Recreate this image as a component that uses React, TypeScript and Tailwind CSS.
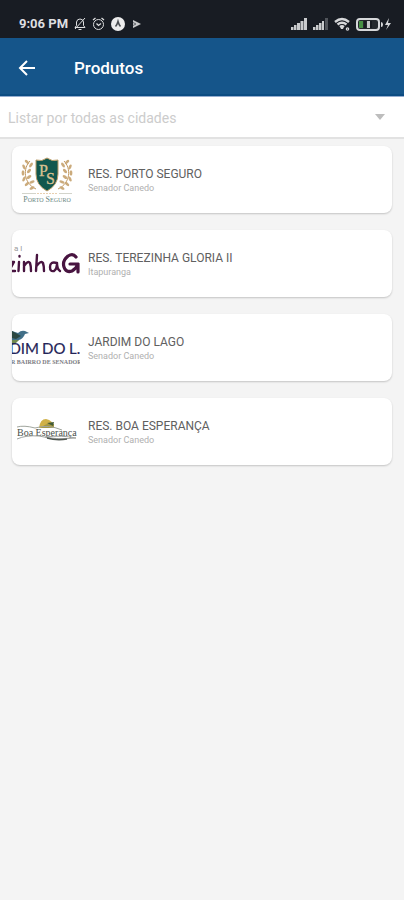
import React from "react";

function PortoSeguroLogo() {
  const leaves = [
    [13, 16, -50], [10, 21, -25], [9, 27, 0], [10, 33, 25], [13, 38, 50], [18, 42, 65],
    [17, 19, 35], [15, 25, 40], [15, 31, 55], [18, 36, 70],
  ];
  const branch = (
    <g>
      <path d="M18 15 C11 22 11 37 24 43" fill="none" stroke="#c39a63" strokeWidth="1" />
      {leaves.map(([x, y, r]) => (
        <ellipse key={`${x}-${y}`} cx={x + 2} cy={y} rx="1.400" ry="2.700" fill="#cbab7c" transform={`rotate(${r} ${x + 2} ${y})`} />
      ))}
    </g>
  );
  return (
    <svg viewBox="0 0 68 67" className="h-full w-full" role="img" aria-label="Porto Seguro">
      {branch}
      <g transform="translate(70 0) scale(-1 1)">{branch}</g>
      <path d="M35 12 Q40 16 46 14 V28 Q46 39 35 45 Q24 39 24 28 V14 Q30 16 35 12Z" fill="#11574e" stroke="#b99b65" strokeWidth="1" />
      <text x="27" y="30" fontFamily="Liberation Serif, serif" fontSize="16" fill="#d9c191" stroke="#d9c191" strokeWidth=".3">P</text>
      <text x="34" y="38" fontFamily="Liberation Serif, serif" fontSize="16" fill="#d9c191" stroke="#d9c191" strokeWidth=".3">S</text>
      <path d="M10 47.500H24M47 47.500H60" stroke="#d3d4cb" strokeWidth="1" />
      <path d="M25 47.500H46" stroke="#e8cfb0" strokeWidth="1" strokeDasharray="2 1" />
      <text x="35" y="56" textAnchor="middle" fontFamily="Liberation Serif, serif" fontSize="8" fill="#6a8783">
        P<tspan fontSize="6">ORTO</tspan> S<tspan fontSize="6">EGURO</tspan>
      </text>
    </svg>
  );
}

function TerezinhaLogo() {
  return (
    <svg viewBox="0 0 68 67" className="h-full w-full" role="img" aria-label="Terezinha Gloria">
      <text x="2" y="21" fontFamily="Roboto, sans-serif" fontSize="8" fill="#9b9b9b">a l</text>
      <g fill="none" stroke="#481440" strokeWidth="2.400" strokeLinecap="round" strokeLinejoin="round">
        <path d="M-5 32H2L-3 41H3" />
        <path d="M7 32L6.500 41M7.500 26V26.500" />
        <path d="M12 32V41M12 36Q16 30 18 33Q19 36 19 41" />
        <path d="M25 25L24 41M24.500 36Q29 30 31 33Q32 36 32 41" />
        <path d="M45 33Q38 31 38 37Q38 42 42 41Q45 39 45 33Q45 39 48 41" />
        <path d="M64 27Q61 23 56 26Q50 31 52 37Q54 43 60 41Q64 39 66 34H58M66 34V42" strokeWidth="3.200" />
      </g>
    </svg>
  );
}

function JardimLogo() {
  return (
    <svg viewBox="0 0 68 67" className="h-full w-full" role="img" aria-label="Jardim do Lago">
      <path d="M0 17L6 19Q9 16 13 17L17 19L13 20Q11 25 7 26L2 28L0 26Z" fill="#416f88" />
      <path d="M0 17L9 22L4 25L0 24Z" fill="#2b4740" />
      <path d="M0 26L7 26L3 30L0 31Z" fill="#71894e" />
      <g fontFamily="Lato, sans-serif" fontSize="15" fill="#242458" stroke="#242458" strokeWidth=".2">
        <text x="27" y="40" textAnchor="end">DIM</text>
        <text x="30" y="40">DO</text>
        <text x="57" y="40">L.</text>
      </g>
      <text x="-1" y="50" fontFamily="Liberation Serif, serif" fontWeight="bold" fontSize="6" fill="#7b7b82">R BAIRRO DE SENADOR</text>
    </svg>
  );
}

function BoaEsperancaLogo() {
  return (
    <svg viewBox="0 0 68 67" className="h-full w-full" role="img" aria-label="Boa Esperança">
      <path d="M27 30Q28 21 34 21Q41 22 42 30Z" fill="#d0b148" />
      <path d="M30 29Q35 24 42 26L42 30H28Z" fill="#a59842" />
      <path d="M35 25L42 24L41 28Z" fill="#435b36" />
      <path d="M5 29Q12 27 23 30M23 30Q36 26 50 32" fill="none" stroke="#a0a59d" strokeWidth="1" />
      <text x="5" y="38" fontFamily="Liberation Serif, serif" fontSize="10" fill="#4a504b">Boa Esperança</text>
      <path d="M5 41Q14 37 27 38Q43 42 64 40Q50 37 33 39" fill="none" stroke="#a0a3a0" strokeWidth="1" />
      <path d="M35 40Q45 43 55 41" fill="none" stroke="#505751" strokeWidth="1.500" />
    </svg>
  );
}

const products = [
  { name: "RES. PORTO SEGURO", city: "Senador Canedo", Logo: PortoSeguroLogo },
  { name: "RES. TEREZINHA GLORIA II", city: "Itapuranga", Logo: TerezinhaLogo },
  { name: "JARDIM DO LAGO", city: "Senador Canedo", Logo: JardimLogo },
  { name: "RES. BOA ESPERANÇA", city: "Senador Canedo", Logo: BoaEsperancaLogo },
];

function StatusBar() {
  return (
    <div className="flex h-[38px] items-end justify-between bg-[#181c23] pr-3 pb-1.5 pl-[19px] text-[#dedfe0]">
      <div className="flex items-center gap-1.5">
        <span className="text-[13px] leading-4 font-bold">9:06 PM</span>
        <svg width="12" height="14" viewBox="0 0 12 14" fill="none" stroke="currentColor" aria-hidden="true">
          <path d="M1 10.500H11L9.500 8.500V5Q9 2 6 2Q3 2 2.500 5V8.500ZM4.500 12.500H7.500M1 12L11 1" />
        </svg>
        <svg width="13" height="14" viewBox="0 0 13 14" fill="none" stroke="currentColor" aria-hidden="true">
          <circle cx="6.500" cy="7.500" r="5" />
          <path d="M1 3L3.500 1M12 3L9.500 1M4.500 6.500L6.500 8.500L9 6.500" strokeWidth="1.300" />
        </svg>
        <svg width="14" height="14" viewBox="0 0 14 14" aria-hidden="true">
          <circle cx="7" cy="7" r="7" fill="#ededed" />
          <path d="M4.500 9.500Q6 8 7 4.500Q8 8 9.500 9.500" fill="none" stroke="#4b4e52" strokeWidth="1.600" />
        </svg>
        <svg width="12" height="14" viewBox="0 0 12 14" aria-hidden="true">
          <path d="M2 3L10 7L2 11Z" fill="#c8c9cb" />
          <path d="M2 5.500L5 7L2 8.500" fill="none" stroke="#666a70" />
        </svg>
      </div>
      <div className="flex items-center gap-1.5">
        <svg width="16" height="16" viewBox="0 0 16 16" fill="#c9cbcd" aria-hidden="true">
          <path d="M0 11H2.500V14H0ZM3 9H5.500V14H3ZM6 7H9V14H6ZM9.500 5H12.500V14H9.500ZM13 2H16V14H13Z" />
        </svg>
        <svg width="15" height="16" viewBox="0 0 15 16" fill="#c9cbcd" aria-hidden="true">
          <path d="M0 11H2.500V14H0ZM3 9H5.500V14H3ZM6 7H8.500V14H6Z" />
          <path d="M12 2H15V14H12Z" fill="#50545a" />
          <path d="M9 5H11V14H9Z" />
        </svg>
        <svg width="16" height="16" viewBox="0 0 16 16" fill="none" stroke="#d7d8da" strokeWidth="2.400" aria-hidden="true">
          <path d="M1 6Q8 0 15 6M3.500 8.500Q8 5 12.500 8.500M6 11Q8 9.500 10 11" />
          <path d="M8 10V13" />
          <circle cx="13.500" cy="13" r=".6" />
        </svg>
        <svg width="36" height="16" viewBox="0 0 36 16" aria-hidden="true">
          <rect x="1" y="3" width="22" height="11" rx="3" fill="#24292d" stroke="#d6d8da" strokeWidth="2" />
          <rect x="3" y="5" width="4" height="7" fill="#479044" />
          <path d="M8 5H10V12H8ZM14 5H16V12H14Z" fill="#171b20" />
          <path d="M11 5H14V12H11Z" fill="#c5c7c9" />
          <path d="M25 6Q27 6 27 8.500Q27 11 25 11Z" fill="#d6d8da" />
          <path d="M33 2L29 9H32L30 14L35 7H32Z" fill="#d6d8da" />
        </svg>
      </div>
    </div>
  );
}

export default function App() {
  return (
    <div className="min-h-screen bg-[#f4f4f4] font-[Roboto,sans-serif]">
      <StatusBar />
      <header className="flex h-[59px] items-center gap-9 border-b border-[#94add0] bg-[#15558a] pt-0.5 pl-4 text-white shadow-[inset_0_-2px_0_#0c4c82]">
        <button type="button" aria-label="Voltar" className="flex h-6 w-[22px] items-center justify-center">
          <svg width="18" height="18" viewBox="0 0 18 18" fill="none" stroke="currentColor" strokeWidth="2" aria-hidden="true">
            <path d="M17 9H2M9 2L2 9L9 16" />
          </svg>
        </button>
        <h1 className="text-[17px] leading-6 font-medium">Produtos</h1>
      </header>
      <main>
        <div className="grid h-[42px] items-center border-b-2 border-[#e2e2e2] bg-white">
          <label htmlFor="city" className="sr-only">Cidade</label>
          <select id="city" className="col-start-1 row-start-1 h-10 w-full appearance-none bg-transparent pt-0.5 pr-10 pl-2 text-[14px] text-[#cccccc] outline-none">
            <option>Listar por todas as cidades</option>
            <option>Senador Canedo</option>
            <option>Itapuranga</option>
          </select>
          <svg width="10" height="6" viewBox="0 0 10 6" className="pointer-events-none col-start-1 row-start-1 mr-[19px] justify-self-end" aria-hidden="true">
            <path d="M0 0H10L5 6Z" fill="#bdbdbd" />
          </svg>
        </div>
        <ul className="flex flex-col gap-[17px] px-3 pt-[7px] pb-4">
          {products.map(({ name, city, Logo }) => (
            <li key={name} className="flex h-[67px] items-center overflow-hidden rounded-lg bg-white shadow-[0_1px_2px_#00000033]">
              <div className="h-full w-[68px] shrink-0 overflow-hidden">
                <Logo />
              </div>
              <div className="min-w-0 pl-2">
                <h2 className="text-[12px] leading-4 text-[#606060]">{name}</h2>
                <p className="text-[9px] leading-3 text-[#b0b0b0]">{city}</p>
              </div>
            </li>
          ))}
        </ul>
      </main>
    </div>
  );
}
